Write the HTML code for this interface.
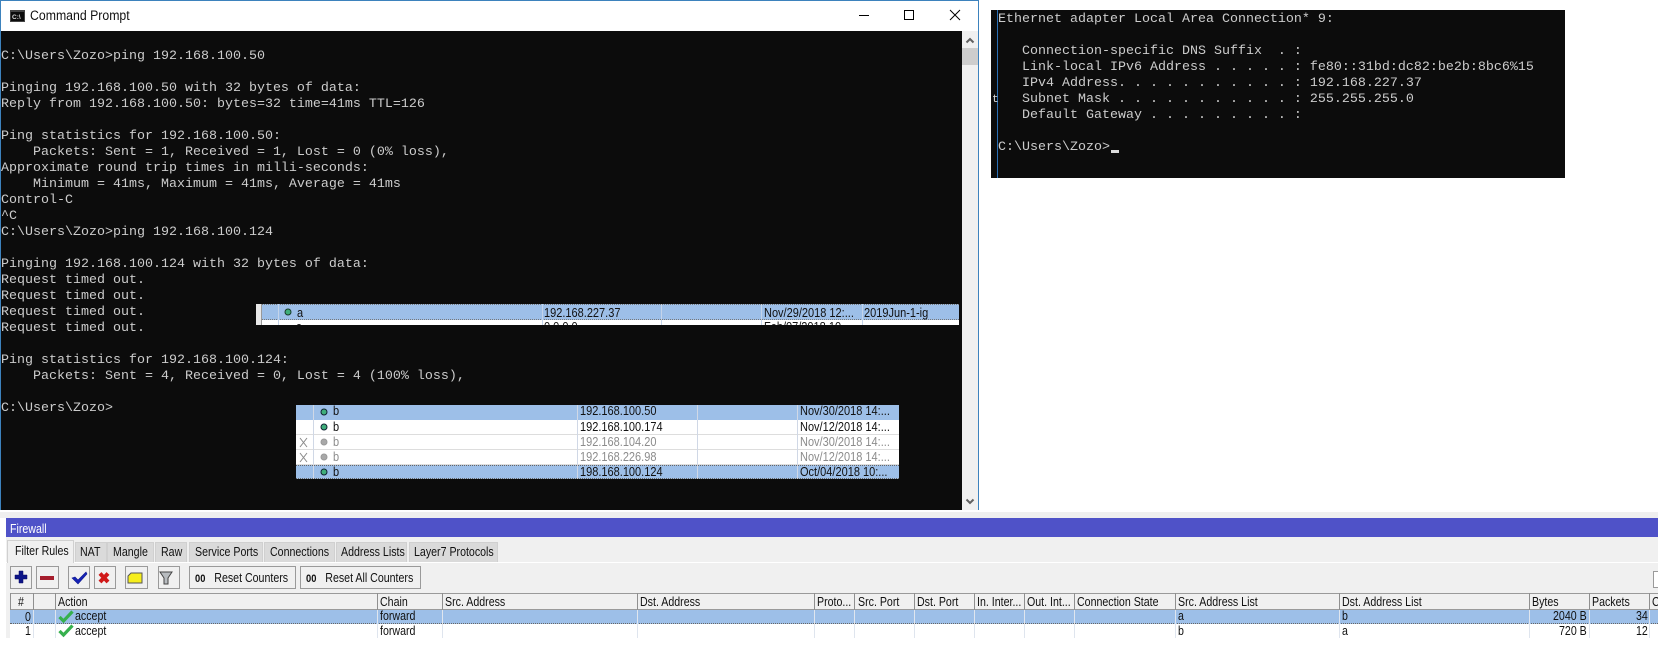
<!DOCTYPE html>
<html><head><meta charset="utf-8"><style>
html,body{margin:0;padding:0;width:1658px;height:649px;overflow:hidden;background:#fff}
div,span,pre{position:absolute;margin:0;padding:0}
pre{font:13.33px/16px "Liberation Mono",monospace;color:#ccc;white-space:pre;left:0;top:0}
.t{font:12.5px/15px "Liberation Sans",sans-serif;color:#111;white-space:pre;transform:scaleX(.88);transform-origin:0 50%}
#fw .t{transform:scaleX(.85)}
.g{color:#8c8c8c}
.v{width:1px;background:#bdbdbd}
.h{width:1px;background:#8f8f8f;top:593px;height:17px}
.tb{background:#dadada;border:1px solid #d0d0d0;border-bottom:0;top:542px;height:20px;box-sizing:border-box}
.btn{background:#f0f0f0;border:1px solid #9a9a9a;box-sizing:border-box;top:566px;height:23px}
</style></head><body>

<!-- Command Prompt window -->
<div style="left:0;top:0;width:979px;height:510px;background:#fff"></div>
<div style="left:0;top:0;width:979px;height:1px;background:#3d82bd"></div>
<div style="left:0;top:0;width:1px;height:510px;background:#3d82bd"></div>
<div style="left:978px;top:0;width:1px;height:510px;background:#3d82bd"></div>
<svg style="position:absolute;left:10px;top:10px" width="15" height="12" viewBox="0 0 15 12"><rect width="15" height="12" fill="#444"/><rect x="1" y="2" width="13" height="9" fill="#0c0c0c"/><text x="2" y="9" font-family="Liberation Sans" font-size="6.5" font-weight="bold" fill="#ddd">C:\</text></svg>
<span class="t" style="left:30px;top:7px;font-size:13.5px;transform:scaleX(.91);line-height:17px;color:#111">Command Prompt</span>
<svg style="position:absolute;left:855px;top:8px" width="112" height="16" viewBox="0 0 112 16" fill="none" stroke="#000" stroke-width="1"><path d="M4 7.5H14"/><rect x="49.5" y="2.5" width="9" height="9"/><path d="M95 2L105 12M105 2L95 12"/></svg>
<div style="left:1px;top:31px;width:961px;height:479px;background:#0c0c0c"></div>
<div style="left:962px;top:31px;width:16px;height:479px;background:#f0f0f0"></div>
<div style="left:962px;top:48px;width:16px;height:17px;background:#cdcdcd"></div>
<svg style="position:absolute;left:962px;top:31px" width="16" height="479" viewBox="0 0 16 479" fill="none" stroke="#606060" stroke-width="2"><path d="M4.5 11.5L8 8L11.5 11.5"/><path d="M4.5 468.500L8 472L11.500 468.500"/></svg>
<pre style="left:1px;top:49px">C:\Users\Zozo&gt;ping 192.168.100.50

Pinging 192.168.100.50 with 32 bytes of data:
Reply from 192.168.100.50: bytes=32 time=41ms TTL=126

Ping statistics for 192.168.100.50:
    Packets: Sent = 1, Received = 1, Lost = 0 (0% loss),
Approximate round trip times in milli-seconds:
    Minimum = 41ms, Maximum = 41ms, Average = 41ms
Control-C
^C
C:\Users\Zozo&gt;ping 192.168.100.124

Pinging 192.168.100.124 with 32 bytes of data:
Request timed out.
Request timed out.
Request timed out.
Request timed out.

Ping statistics for 192.168.100.124:
    Packets: Sent = 4, Received = 0, Lost = 4 (100% loss),

C:\Users\Zozo&gt;</pre>

<!-- Second console -->
<div style="left:991px;top:10px;width:574px;height:168px;background:#0c0c0c"></div>
<div style="left:997px;top:10px;width:1px;height:168px;background:#2a6fb5"></div>
<pre style="left:998px;top:12px">Ethernet adapter Local Area Connection* 9:

   Connection-specific DNS Suffix  . :
   Link-local IPv6 Address . . . . . : fe80::31bd:dc82:be2b:8bc6%15
   IPv4 Address. . . . . . . . . . . : 192.168.227.37
   Subnet Mask . . . . . . . . . . . : 255.255.255.0
   Default Gateway . . . . . . . . . :

C:\Users\Zozo&gt;</pre>
<div style="left:1111px;top:150px;width:8px;height:3px;background:#ddd"></div>
<pre style="left:992px;top:92px;color:#ddd;font-size:11px">t</pre>

<!-- Strip 1 -->
<div style="left:256px;top:304px;width:703px;height:21px;background:#fff;overflow:hidden"></div>
<div style="left:256px;top:304px;width:703px;height:16px;background:#9dbfe8;border-top:1px dotted #777;border-bottom:1px dotted #777;box-sizing:border-box"></div>
<div style="left:256px;top:304px;width:6px;height:21px;background:#e8e8e8;border-right:1px solid #999;box-sizing:border-box"></div>
<div class="v" style="left:278px;top:304px;height:21px;background:#c4d4ea"></div>
<div class="v" style="left:542px;top:304px;height:21px;background:#c4d4ea"></div>
<div class="v" style="left:661px;top:304px;height:21px;background:#c4d4ea"></div>
<div class="v" style="left:761px;top:304px;height:21px;background:#c4d4ea"></div>
<div class="v" style="left:862px;top:304px;height:21px;background:#c4d4ea"></div>
<svg style="position:absolute;left:284px;top:308px" width="8" height="8"><circle cx="4" cy="4" r="3" fill="#3fae7a" stroke="#1a3a2a"/></svg>
<span class="t" style="left:297px;top:306px">a</span>
<span class="t" style="left:544px;top:306px">192.168.227.37</span>
<span class="t" style="left:764px;top:306px">Nov/29/2018 12:...</span>
<span class="t" style="left:864px;top:306px">2019Jun-1-ig</span>
<div style="left:256px;top:320px;width:703px;height:5px;overflow:hidden">
<span class="t" style="left:40px;top:0">a</span><span class="t" style="left:288px;top:0">0.0.0.0</span><span class="t" style="left:508px;top:0">Feb/07/2018 10</span>
</div>

<!-- Strip 2 -->
<div style="left:296px;top:405px;width:603px;height:74px;background:#fff"></div>
<div style="left:296px;top:405px;width:603px;height:15px;background:#9dbfe8"></div>
<div style="left:296px;top:465px;width:603px;height:14px;background:#9dbfe8;border-top:1px dotted #666;border-bottom:1px dotted #666;box-sizing:border-box"></div>
<div style="left:296px;top:434px;width:603px;height:1px;background:#ddd"></div>
<div style="left:296px;top:449px;width:603px;height:1px;background:#ddd"></div>
<div style="left:296px;top:464px;width:603px;height:1px;background:#ddd"></div>
<div class="v" style="left:313px;top:405px;height:74px;background:#d0d8e6"></div>
<div class="v" style="left:577px;top:405px;height:74px;background:#d0d8e6"></div>
<div class="v" style="left:697px;top:405px;height:74px;background:#d0d8e6"></div>
<div class="v" style="left:797px;top:405px;height:74px;background:#d0d8e6"></div>
<svg style="position:absolute;left:296px;top:405px" width="40" height="74" fill="none"><g fill="#3fae7a" stroke="#123"><circle cx="28" cy="7" r="3"/><circle cx="28" cy="22" r="3"/><circle cx="28" cy="67" r="3"/></g><g fill="#a8a8a8" stroke="#999"><circle cx="28" cy="37" r="3"/><circle cx="28" cy="52" r="3"/></g><path d="M4 33L11 42M11 33L4 42M4 48L11 57M11 48L4 57" stroke="#888"/></svg>
<span class="t" style="left:333px;top:404px">b</span><span class="t" style="left:580px;top:404px">192.168.100.50</span><span class="t" style="left:800px;top:404px">Nov/30/2018 14:...</span>
<span class="t" style="left:333px;top:420px">b</span><span class="t" style="left:580px;top:420px">192.168.100.174</span><span class="t" style="left:800px;top:420px">Nov/12/2018 14:...</span>
<span class="t g" style="left:333px;top:435px">b</span><span class="t g" style="left:580px;top:435px">192.168.104.20</span><span class="t g" style="left:800px;top:435px">Nov/30/2018 14:...</span>
<span class="t g" style="left:333px;top:450px">b</span><span class="t g" style="left:580px;top:450px">192.168.226.98</span><span class="t g" style="left:800px;top:450px">Nov/12/2018 14:...</span>
<span class="t" style="left:333px;top:465px">b</span><span class="t" style="left:580px;top:465px">198.168.100.124</span><span class="t" style="left:800px;top:465px">Oct/04/2018 10:...</span>

<!-- Firewall -->
<div id="fw" style="left:0;top:0;width:1658px;height:649px">
<div style="left:0;top:512px;width:1658px;height:6px;background:#efefef"></div>
<div style="left:6px;top:518px;width:1652px;height:120px;background:#f0f0f0"></div>
<div style="left:6px;top:518px;width:1652px;height:19px;background:#4f52c8"></div>
<span class="t" style="left:10px;top:522px;color:#fff">Firewall</span>
<div style="left:6px;top:562px;width:1652px;height:1px;background:#fff"></div>
<div class="tb" style="left:75px;width:32px"></div><span class="t" style="left:80px;top:545px">NAT</span>
<div class="tb" style="left:107px;width:47px"></div><span class="t" style="left:113px;top:545px">Mangle</span>
<div class="tb" style="left:155px;width:32px"></div><span class="t" style="left:161px;top:545px">Raw</span>
<div class="tb" style="left:189px;width:74px"></div><span class="t" style="left:195px;top:545px">Service Ports</span>
<div class="tb" style="left:264px;width:71px"></div><span class="t" style="left:270px;top:545px">Connections</span>
<div class="tb" style="left:336px;width:71px"></div><span class="t" style="left:341px;top:545px">Address Lists</span>
<div class="tb" style="left:409px;width:89px"></div><span class="t" style="left:414px;top:545px">Layer7 Protocols</span>
<div style="left:7px;top:540px;width:67px;height:23px;background:#f0f0f0;border:1px solid #d0d0d0;border-bottom:0;box-sizing:border-box"></div>
<span class="t" style="left:15px;top:544px">Filter Rules</span>

<div class="btn" style="left:10px;width:22px"></div>
<div class="btn" style="left:36px;width:23px"></div>
<div class="btn" style="left:68px;width:22px"></div>
<div class="btn" style="left:94px;width:22px"></div>
<div class="btn" style="left:125px;width:23px"></div>
<div class="btn" style="left:158px;width:22px"></div>
<div class="btn" style="left:189px;width:107px"></div>
<div class="btn" style="left:300px;width:121px"></div>
<div class="btn" style="left:1653px;top:571px;width:8px;height:17px;background:#fff"></div>
<svg style="position:absolute;left:10px;top:566px" width="172" height="23" viewBox="0 0 172 23">
<path d="M9 5h4v4h4v4h-4v4H9v-4H5V9h4z" fill="#0c1488" stroke="#0a0a60" stroke-width=".5"/>
<rect x="30" y="10" width="14" height="4" fill="#a51d2d"/>
<path d="M62 12l3-1 3 3 8-8 1 2-9 10z" fill="#1522b5" stroke="#101a90" stroke-width=".6"/>
<path d="M90 7.500L98 16M98 7.500L90 16" stroke="#d01818" stroke-width="4" fill="none"/>
<path d="M118 10l3-3h11v10h-14z" fill="#f6ee1c" stroke="#555"/>
<path d="M150 6h12l-4 6v6h-4v-6z" fill="#b8bcc0" stroke="#444"/>
</svg>
<span class="t" style="left:195px;top:571px"><b style="font-size:11px">00</b>   Reset Counters</span>
<span class="t" style="left:306px;top:571px"><b style="font-size:11px">00</b>   Reset All Counters</span>

<!-- Table -->
<div style="left:10px;top:593px;width:1648px;height:17px;background:#f0f0f0;border-top:1px solid #9a9a9a;border-bottom:1px solid #9a9a9a;box-sizing:border-box"></div>
<div style="left:10px;top:610px;width:1648px;height:14px;background:#9dbfe8;border-bottom:1px dotted #666;box-sizing:border-box"></div>
<div style="left:10px;top:624px;width:1648px;height:14px;background:#fff"></div>
<div class="h" style="left:10px"></div><div class="h" style="left:33px"></div><div class="h" style="left:55px"></div><div class="h" style="left:377px"></div><div class="h" style="left:442px"></div><div class="h" style="left:637px"></div><div class="h" style="left:814px"></div><div class="h" style="left:854px"></div><div class="h" style="left:914px"></div><div class="h" style="left:974px"></div><div class="h" style="left:1024px"></div><div class="h" style="left:1074px"></div><div class="h" style="left:1175px"></div><div class="h" style="left:1339px"></div><div class="h" style="left:1529px"></div><div class="h" style="left:1589px"></div><div class="h" style="left:1649px"></div>
<svg style="position:absolute;left:0;top:610px" width="1658" height="28" stroke="#dfe5ee"><path d="M33.500 0V28M55.500 0V28M377.500 0V28M442.500 0V28M637.500 0V28M814.500 0V28M854.500 0V28M914.500 0V28M974.500 0V28M1024.500 0V28M1074.500 0V28M1175.500 0V28M1339.500 0V28M1529.500 0V28M1589.500 0V28M1649.500 0V28"/></svg>
<span class="t" style="left:18px;top:595px">#</span>
<span class="t" style="left:58px;top:595px">Action</span>
<span class="t" style="left:380px;top:595px">Chain</span>
<span class="t" style="left:445px;top:595px">Src. Address</span>
<span class="t" style="left:640px;top:595px">Dst. Address</span>
<span class="t" style="left:817px;top:595px">Proto...</span>
<span class="t" style="left:858px;top:595px">Src. Port</span>
<span class="t" style="left:917px;top:595px">Dst. Port</span>
<span class="t" style="left:977px;top:595px">In. Inter...</span>
<span class="t" style="left:1027px;top:595px">Out. Int...</span>
<span class="t" style="left:1077px;top:595px">Connection State</span>
<span class="t" style="left:1178px;top:595px">Src. Address List</span>
<span class="t" style="left:1342px;top:595px">Dst. Address List</span>
<span class="t" style="left:1532px;top:595px">Bytes</span>
<span class="t" style="left:1592px;top:595px">Packets</span>
<span class="t" style="left:1652px;top:595px">C</span>
<svg style="position:absolute;left:58px;top:610px" width="18" height="28" fill="none" stroke="#36b04e" stroke-width="3.200"><path d="M1.500 7L5.500 11L14.500 1.500M1.500 21L5.500 25L14.500 15.500"/></svg>
<span class="t" style="left:25px;top:610px">0</span><span class="t" style="left:75px;top:609px">accept</span><span class="t" style="left:380px;top:609px">forward</span><span class="t" style="left:1178px;top:609px">a</span><span class="t" style="left:1342px;top:609px">b</span><span class="t" style="left:1553px;top:609px">2040 B</span><span class="t" style="left:1636px;top:609px">34</span>
<span class="t" style="left:25px;top:624px">1</span><span class="t" style="left:75px;top:624px">accept</span><span class="t" style="left:380px;top:624px">forward</span><span class="t" style="left:1178px;top:624px">b</span><span class="t" style="left:1342px;top:624px">a</span><span class="t" style="left:1559px;top:624px">720 B</span><span class="t" style="left:1636px;top:624px">12</span>
</div>
</body></html>
